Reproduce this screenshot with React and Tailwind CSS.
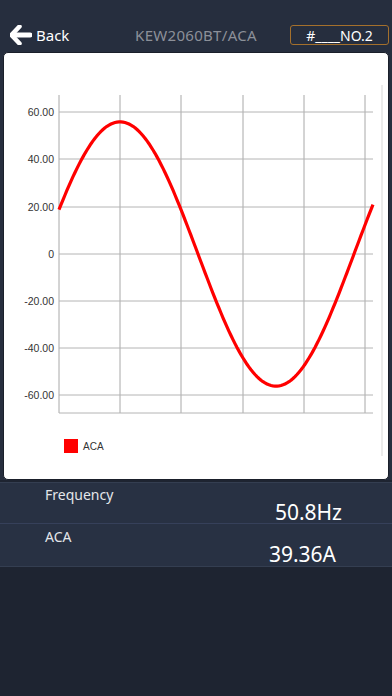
import React from 'react';

const gridX = [58, 119, 180, 242, 303, 364];
const gridY = [
  { y: 111, label: '60.00' },
  { y: 158, label: '40.00' },
  { y: 206, label: '20.00' },
  { y: 253, label: '0' },
  { y: 300, label: '-20.00' },
  { y: 347, label: '-40.00' },
  { y: 394, label: '-60.00' },
];

// sine wave, peak at x=119, period 312px, amplitude 56
const wavePath = () => {
  const pts = [];
  for (let x = 58; x <= 372; x += 2) {
    const v = 56 * Math.cos(((x - 119) / 312) * 2 * Math.PI);
    const y = 253 - v * 2.36;
    pts.push(`${x - 3},${(y - 52).toFixed(1)}`);
  }
  return 'M' + pts.join(' L');
};

const WaveChart = () => (
  <svg width="386" height="428" viewBox="0 0 386 428" className="block">
    {gridX.map((x) => (
      <line key={x} x1={x - 3} y1={94 - 52} x2={x - 3} y2={412 - 52} stroke="#a8a8a8" strokeWidth="1" />
    ))}
    {gridY.map((g) => (
      <g key={g.label}>
        <line x1={58 - 3} y1={g.y - 52} x2={372 - 3} y2={g.y - 52} stroke="#b4b4b4" strokeWidth="1" />
        <text
          x={53 - 3}
          y={g.y - 52 + 3.5}
          textAnchor="end"
          fontSize="10.5"
          fill="#333"
          fontFamily="Liberation Sans, Arial, sans-serif"
        >
          {g.label}
        </text>
      </g>
    ))}
    <line x1={58 - 3} y1={412 - 52} x2={372 - 3} y2={412 - 52} stroke="#b4b4b4" strokeWidth="1" />
    <line x1={381 - 3} y1={84 - 52} x2={381 - 3} y2={455 - 52} stroke="#e4e4e4" strokeWidth="1.5" />
    <path d={wavePath()} fill="none" stroke="#ff0000" strokeWidth="3.2" strokeLinejoin="round" />
    <rect x={63 - 3} y={438 - 52} width="14" height="14" fill="#ff0000" />
    <text x={82 - 3} y={445 - 52 + 3.5} fontSize="10" fill="#333" fontFamily="Liberation Sans, Arial, sans-serif">
      ACA
    </text>
  </svg>
);

const App = () => {
  return (
    <div className="w-[392px] h-[696px] bg-[#1e2431] flex flex-col" style={{ fontFamily: '"Noto Sans", "Open Sans", sans-serif' }}>
      <div className="bg-[#262e3e] pt-[24px] pb-[6px]">
        <div className="h-[22px] flex items-center justify-between pl-[10px] pr-[3px] relative">
          <div className="flex items-center gap-[4px] text-white">
            <svg width="22" height="20" viewBox="0 0 22 20">
              <path d="M9.5 1.5 L1.5 10 L9.5 18.5" fill="none" stroke="#fff" strokeWidth="4.5" strokeLinecap="round" strokeLinejoin="round" />
              <path d="M3 10 L20 10" fill="none" stroke="#fff" strokeWidth="5" strokeLinecap="round" />
            </svg>
            <span className="text-[15px] leading-none">Back</span>
          </div>
          <span className="absolute left-0 right-0 text-center text-[15px] text-[#8c9099] tracking-[0.3px] pointer-events-none">
            KEW2060BT/ACA
          </span>
          <div className="w-[99px] h-[20px] border border-[#a4702c] rounded-[3px] flex items-center justify-center text-white text-[14px]">
            #____NO.2
          </div>
        </div>
      </div>
      <div className="bg-[#262e3e] px-[3px]">
        <div className="bg-white rounded-[5px] h-[428px] border border-[#1a1f2a] overflow-hidden">
          <WaveChart />
        </div>
      </div>
      <div className="mt-[2px] bg-[#283143] border-y border-[#343e51]">
        <div className="h-[41px] border-b border-[#36405a] relative">
          <span className="absolute left-[45px] top-[1px] text-[14px] text-[#e4e6ea]">Frequency</span>
          <span className="absolute right-[50px] top-[14px] text-[21px] text-white">50.8Hz</span>
        </div>
        <div className="h-[42px] relative">
          <span className="absolute left-[45px] top-[2px] text-[14px] text-[#e4e6ea]">ACA</span>
          <span className="absolute right-[56px] top-[15px] text-[21px] text-white">39.36A</span>
        </div>
      </div>
      <div className="flex-1" />
    </div>
  );
};

export default App;
